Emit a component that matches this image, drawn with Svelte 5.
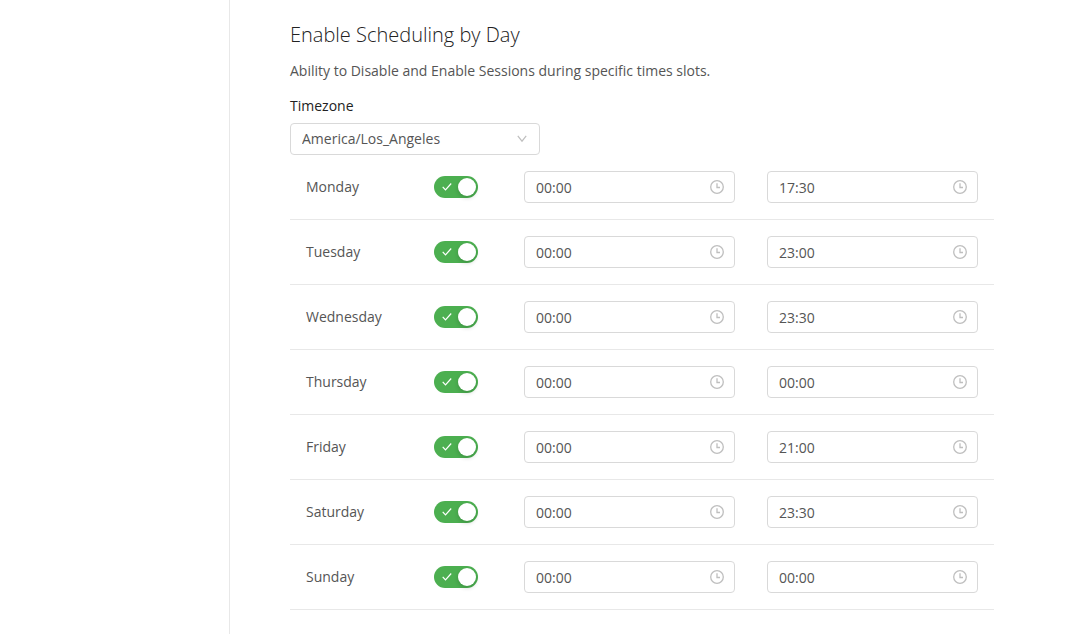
<script>
	/**
	 * @typedef {Object} Day
	 * @prop {string} name
	 * @prop {boolean} enabled
	 * @prop {string} start
	 * @prop {string} end
	 */

	const timezones = ['America/Los_Angeles', 'America/Denver', 'America/Chicago', 'America/New_York'];

	let timezone = $state('America/Los_Angeles');

	/** @type {Day[]} */
	let days = $state([
		{ name: 'Monday', enabled: true, start: '00:00', end: '17:30' },
		{ name: 'Tuesday', enabled: true, start: '00:00', end: '23:00' },
		{ name: 'Wednesday', enabled: true, start: '00:00', end: '23:30' },
		{ name: 'Thursday', enabled: true, start: '00:00', end: '00:00' },
		{ name: 'Friday', enabled: true, start: '00:00', end: '21:00' },
		{ name: 'Saturday', enabled: true, start: '00:00', end: '23:30' },
		{ name: 'Sunday', enabled: true, start: '00:00', end: '00:00' }
	]);
</script>

{#snippet clock()}
	<svg class="clock" viewBox="0 0 14 14" aria-hidden="true">
		<circle cx="7" cy="7" r="6.3" />
		<path d="M7 3.2V7.5H10" />
	</svg>
{/snippet}

<div class="layout">
	<aside></aside>
	<main>
		<h2>Enable Scheduling by Day</h2>
		<p>Ability to Disable and Enable Sessions during specific times slots.</p>

		<label class="title" for="timezone">Timezone</label>
		<div class="select">
			<select id="timezone" bind:value={timezone}>
				{#each timezones as zone}
					<option value={zone}>{zone}</option>
				{/each}
			</select>
			<svg viewBox="0 0 10 8" aria-hidden="true">
				<path d="M0.8 0.8L5 6.2L9.2 0.8" />
			</svg>
		</div>

		<table aria-label="Schedule by day">
			<colgroup>
				<col class="col-day" />
				<col class="col-switch" />
				<col />
				<col />
			</colgroup>
			<tbody>
				{#each days as day, i}
					<tr>
						<th scope="row"><label for={`day-${i}`}>{day.name}</label></th>
						<td>
							<div class="switch">
								<input id={`day-${i}`} type="checkbox" role="switch" bind:checked={day.enabled} />
								<svg viewBox="0 0 10 8" aria-hidden="true">
									<path d="M0.7 3.8L3.5 6.9L9.2 0.5" />
								</svg>
							</div>
						</td>
						<td>
							<div class="time">
								<input type="text" aria-label={`${day.name} start`} bind:value={day.start} />
								{@render clock()}
							</div>
						</td>
						<td>
							<div class="time">
								<input type="text" aria-label={`${day.name} end`} bind:value={day.end} />
								{@render clock()}
							</div>
						</td>
					</tr>
				{/each}
			</tbody>
		</table>
	</main>
</div>

<style>
	:global(body) {
		margin: 0;
		background: #fff;
	}

	.layout {
		display: flex;
		min-height: 100vh;
		color: #555;
		font: 14px/22px 'Open Sans', sans-serif;
	}

	.layout,
	.layout * {
		box-sizing: border-box;
	}

	aside {
		flex: 0 0 230px;
		border-right: 1px solid #e8e8e8;
	}

	main {
		flex: 1;
		min-width: 0;
		padding: 20px 90px 24px 60px;
	}

	h2 {
		margin: 0 0 10px;
		color: #222;
		font-size: 20px;
		font-weight: 300;
		line-height: 30px;
	}

	p {
		margin: 0 0 13px;
	}

	.title {
		display: block;
		margin-bottom: 6px;
		color: #222;
	}

	input,
	select {
		margin: 0;
		color: inherit;
		font: inherit;
	}

	.select {
		position: relative;
		width: 250px;
	}

	select {
		display: block;
		width: 100%;
		height: 32px;
		padding: 0 32px 0 11px;
		appearance: none;
		background: #fff;
		border: 1px solid #d9d9d9;
		border-radius: 4px;
	}

	.select svg {
		position: absolute;
		top: 12px;
		right: 13px;
		width: 10px;
		height: 8px;
		fill: none;
		stroke: #bfbfbf;
		stroke-width: 1.2;
		pointer-events: none;
	}

	table {
		width: 100%;
		table-layout: fixed;
		border-collapse: separate;
		border-spacing: 0;
	}

	.col-day {
		width: 128px;
	}

	.col-switch {
		width: 90px;
	}

	th,
	td {
		padding: 16px;
		border-bottom: 1px solid #e8e8e8;
		font-weight: normal;
		text-align: left;
		vertical-align: middle;
	}

	th label {
		display: block;
	}

	.switch {
		position: relative;
		width: 44px;
		height: 22px;
	}

	.switch input {
		display: flex;
		width: 44px;
		height: 22px;
		padding: 2px;
		appearance: none;
		background: #bfbfbf;
		border-radius: 11px;
		cursor: pointer;
	}

	.switch input:checked {
		justify-content: flex-end;
		background: #4caf50;
	}

	.switch input::before {
		width: 18px;
		height: 18px;
		background: #fff;
		border-radius: 9px;
		box-shadow: 0 2px 4px rgba(0, 35, 11, 0.2);
		content: '';
	}

	.switch svg {
		position: absolute;
		top: 7px;
		left: 8px;
		width: 10px;
		height: 8px;
		fill: none;
		stroke: #fff;
		stroke-width: 1.2;
		pointer-events: none;
	}

	.switch input:not(:checked) + svg {
		display: none;
	}

	.time {
		display: flex;
		align-items: center;
		height: 32px;
		padding: 0 10px 0 11px;
		border: 1px solid #d9d9d9;
		border-radius: 4px;
	}

	.time input {
		flex: 1;
		min-width: 0;
		height: 30px;
		padding: 0;
		background: none;
		border: 0;
	}

	.clock {
		flex: none;
		width: 14px;
		height: 14px;
		fill: none;
		stroke: #bfbfbf;
		stroke-width: 1.3;
	}
</style>
